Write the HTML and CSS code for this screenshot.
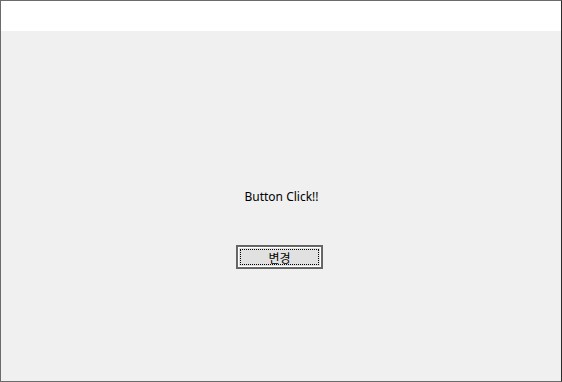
FILE: index.html
```html
<!DOCTYPE html>
<html lang="ko">
<head>
    <meta charset="UTF-8">
    <title>Button Click</title>
    <link rel="stylesheet" href="styles.css">
</head>
<body>
    <div class="window">
        <div class="top-bar"></div>
        <div class="client">
            <div class="label">Button Click!!</div>
            <button class="change-btn">변경</button>
        </div>
    </div>
</body>
</html>
```

FILE: styles.css
```css
html, body {
    margin: 0;
    padding: 0;
}
body {
    font-family: "Noto Sans", "Noto Sans CJK KR", sans-serif;
    font-size: 12px;
    color: #000;
    background: #f0f0f0;
}
.window {
    width: 562px;
    height: 382px;
    box-sizing: border-box;
    border: 1px solid #6b6b6b;
    border-right-color: #2b2b2b;
    display: flex;
    flex-direction: column;
}
.top-bar {
    height: 30px;
    background: #ffffff;
}
.client {
    flex: 1;
    background: #f0f0f0;
    display: flex;
    flex-direction: column;
    align-items: center;
    padding-top: 157px;
}
.label {
    height: 17px;
    line-height: 17px;
    margin-left: 1px;
}
.change-btn {
    margin-top: 40px;
    margin-right: 3px;
    width: 87px;
    height: 24px;
    box-sizing: border-box;
    padding: 0;
    font-family: "Noto Sans CJK KR", sans-serif;
    font-size: 12px;
    color: #000;
    background: #e1e1e1;
    border: 1px solid #646464;
    box-shadow: inset 0 0 0 1px #696969, inset 0 0 0 2px #ffffff;
    outline: 1px dotted #000;
    outline-offset: -5px;
}
```
